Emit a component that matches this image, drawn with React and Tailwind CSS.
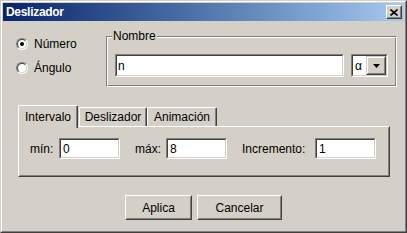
const Field = ({ value, className, pad }) => (
  <div
    className={`border border-t-[#808080] border-l-[#808080] border-r-white border-b-white ${className}`}
  >
    <div
      className={`h-full flex items-center bg-white border border-t-[#404040] border-l-[#404040] border-r-[#d4d0c8] border-b-[#d4d0c8] leading-[12px] ${pad}`}
    >
      {value}
    </div>
  </div>
);

const Radio = ({ checked, label }) => (
  <div className="flex items-center gap-[6px] h-[12px]">
    <span className="block shrink-0 w-[12px] h-[12px] rounded-full border border-t-[#808080] border-l-[#808080] border-r-white border-b-white">
      <span className="flex items-center justify-center w-full h-full rounded-full bg-white border border-t-[#404040] border-l-[#404040] border-r-[#d4d0c8] border-b-[#d4d0c8]">
        {checked && <span className="block w-[4px] h-[4px] rounded-full bg-black" />}
      </span>
    </span>
    <span className="leading-[12px]">{label}</span>
  </div>
);

const Button = ({ children, className }) => (
  <div
    className={`h-[25px] border border-t-white border-l-white border-r-[#404040] border-b-[#404040] ${className}`}
  >
    <div className="h-full flex items-center justify-center border border-t-[#d4d0c8] border-l-[#d4d0c8] border-r-[#808080] border-b-[#808080]">
      {children}
    </div>
  </div>
);

export default function App() {
  return (
    <div className="w-[407px] h-[233px] font-['Liberation_Sans',Arial,sans-serif] text-[12px] text-black">
      <div className="w-full h-full border border-t-[#d4d0c8] border-l-[#d4d0c8] border-r-[#404040] border-b-[#404040]">
        <div className="w-full h-full flex flex-col p-[1px] bg-[#d4d0c8] border border-t-white border-l-white border-r-[#808080] border-b-[#808080]">
          {/* barra de titulo */}
          <div className="h-[18px] shrink-0 flex items-start justify-between pl-[3px] pr-[2px] bg-linear-to-r from-[#0a246a] to-[#a6caf0]">
            <span className="text-white font-bold text-[12px] tracking-[-0.3px] leading-[18px]">
              Deslizador
            </span>
            <div className="mt-[2px] w-[16px] h-[14px] border border-t-white border-l-white border-r-[#404040] border-b-[#404040]">
              <div className="h-full flex items-center justify-center bg-[#d4d0c8] border border-t-[#d4d0c8] border-l-[#d4d0c8] border-r-[#808080] border-b-[#808080]">
                <svg width="8" height="7" viewBox="0 0 8 7">
                  <path d="M0.5 0.5 L7.5 6.5 M7.5 0.5 L0.5 6.5" stroke="black" strokeWidth="1.6" />
                </svg>
              </div>
            </div>
          </div>

          <div className="flex-1 flex flex-col pt-[15px]">
            {/* tipo + nombre */}
            <div className="flex pl-[13px]">
              <div className="w-[90px] pt-[2px] flex flex-col gap-[12px]">
                <Radio checked label="Número" />
                <Radio label="Ángulo" />
              </div>
              <div className="relative w-[291px] h-[51px] border border-t-[#808080] border-l-[#808080] border-r-white border-b-white">
                <div className="h-full flex items-start pl-[7px] pt-[16px] border border-t-white border-l-white border-r-[#808080] border-b-[#808080]">
                  <Field value="n" className="w-[229px] h-[23px]" pad="pl-[1px]" />
                  <div className="ml-[7px] w-[37px] h-[23px] border border-t-[#808080] border-l-[#808080] border-r-white border-b-white">
                    <div className="h-full flex bg-white border border-t-[#404040] border-l-[#404040] border-r-[#d4d0c8] border-b-[#d4d0c8]">
                      <span className="flex-1 flex items-center pl-[2px] text-black leading-[12px]">α</span>
                      <div className="w-[20px] h-full border border-t-[#d4d0c8] border-l-[#d4d0c8] border-r-[#404040] border-b-[#404040]">
                        <div className="h-full flex items-center justify-center bg-[#d4d0c8] border border-t-white border-l-white border-r-[#808080] border-b-[#808080]">
                          <svg width="7" height="4" viewBox="0 0 7 4">
                            <path d="M0 0 H7 L3.5 4 Z" fill="black" />
                          </svg>
                        </div>
                      </div>
                    </div>
                  </div>
                </div>
                <span className="absolute left-[5px] top-[-7px] px-[1px] bg-[#d4d0c8] leading-[12px]">
                  Nombre
                </span>
              </div>
            </div>

            {/* pestañas */}
            <div className="mt-[18px] pl-[15px] flex flex-col">
              <div className="h-[21px] flex items-end">
                <div className="relative z-10 w-[60px] h-[23px] -mb-[2px] pt-[5px] flex justify-center bg-[#d4d0c8] rounded-t-[2px] border-t border-l border-r border-t-white border-l-white border-r-[#404040] shadow-[inset_-1px_0_0_#808080] leading-[12px]">
                  Intervalo
                </div>
                <div className="ml-[1px] w-[68px] h-[19px] pt-[3px] flex justify-center rounded-t-[2px] border-t border-l border-r border-t-white border-l-white border-r-[#404040] shadow-[inset_-1px_0_0_#808080] leading-[12px]">
                  Deslizador
                </div>
                <div className="w-[70px] h-[19px] pt-[3px] flex justify-center rounded-t-[2px] border-t border-l border-r border-t-white border-l-white border-r-[#404040] shadow-[inset_-1px_0_0_#808080] leading-[12px]">
                  Animación
                </div>
              </div>
              <div className="w-[372px] h-[51px] border border-t-white border-l-white border-r-[#404040] border-b-[#404040]">
                <div className="h-full pt-[10px] pl-[10px] border border-t-[#d4d0c8] border-l-[#d4d0c8] border-r-[#808080] border-b-[#808080]">
                  <div className="h-[21px] flex items-center">
                    <span className="w-[29px] leading-[12px]">mín:</span>
                    <Field value="0" className="w-[61px] h-[21px]" pad="pl-[2px]" />
                    <span className="ml-[15px] w-[31px] leading-[12px]">máx:</span>
                    <Field value="8" className="w-[61px] h-[21px]" pad="pl-[2px]" />
                    <span className="ml-[15px] w-[73px] leading-[12px]">Incremento:</span>
                    <Field value="1" className="w-[61px] h-[21px]" pad="pl-[2px]" />
                  </div>
                </div>
              </div>
            </div>

            {/* botones */}
            <div className="mt-[18px] flex justify-center gap-[5px]">
              <Button className="w-[67px]">Aplica</Button>
              <Button className="w-[85px]">Cancelar</Button>
            </div>
          </div>
        </div>
      </div>
    </div>
  );
}
